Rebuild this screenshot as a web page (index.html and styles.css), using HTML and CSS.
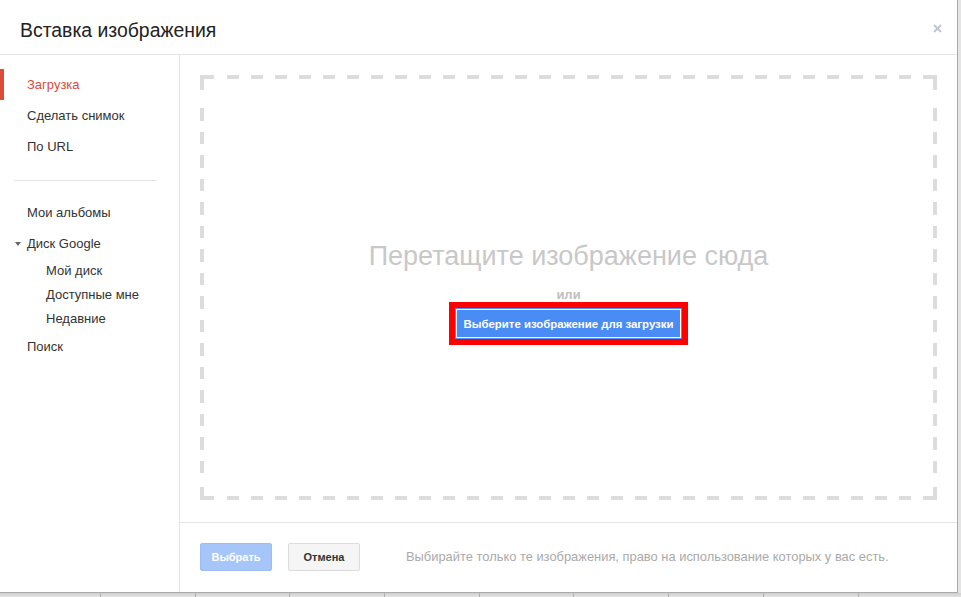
FILE: index.html
```html
<!DOCTYPE html>
<html lang="ru">
<head>
  <meta charset="UTF-8">
  <title>Вставка изображения</title>
  <link rel="stylesheet" href="styles.css">
</head>
<body>
  <div class="dialog">
    <header class="dlg-head">
      <h1 class="dlg-title">Вставка изображения</h1>
      <button class="dlg-close" title="Закрыть">
        <svg width="9" height="9" viewBox="0 0 9 9"><path d="M1 1L8 8M8 1L1 8" stroke="#bfc5d6" stroke-width="2"/></svg>
      </button>
    </header>

    <div class="dlg-body">
      <!-- left nav -->
      <nav class="side">
        <ul class="side-list">
          <li class="side-item active">Загрузка</li>
          <li class="side-item">Сделать снимок</li>
          <li class="side-item">По URL</li>
        </ul>
        <div class="side-sep"></div>
        <ul class="side-list">
          <li class="side-item">Мои альбомы</li>
          <li class="side-item caret-item"><span class="caret"></span>Диск Google</li>
          <li class="side-sub">Мой диск</li>
          <li class="side-sub">Доступные мне</li>
          <li class="side-sub">Недавние</li>
          <li class="side-item">Поиск</li>
        </ul>
      </nav>

      <!-- upload pane -->
      <main class="pane">
        <div class="pane-drop">
          <div class="drop">
            <div class="drop-title">Перетащите изображение сюда</div>
            <div class="drop-or">или</div>
            <button class="btn-upload">Выберите изображение для загрузки</button>
          </div>
        </div>
        <footer class="pane-foot">
          <button class="btn btn-primary" disabled>Выбрать</button>
          <button class="btn btn-plain">Отмена</button>
          <span class="foot-note">Выбирайте только те изображения, право на использование которых у вас есть.</span>
        </footer>
      </main>
    </div>
  </div>

  <div class="strip">
    <span class="strip-cell first"></span>
    <span class="strip-cell"></span>
    <span class="strip-cell"></span>
    <span class="strip-cell"></span>
    <span class="strip-cell"></span>
    <span class="strip-cell"></span>
    <span class="strip-cell"></span>
    <span class="strip-cell"></span>
    <span class="strip-cell"></span>
    <span class="strip-cell"></span>
  </div>
</body>
</html>
```

FILE: styles.css
```css
*{ box-sizing:border-box; }
body{
  margin:0;
  width:961px;
  height:597px;
  overflow:hidden;
  background:#e4e4e4;
  font-family:"Liberation Sans", Arial, sans-serif;
  font-size:13px;
  color:#333;
}
ul{ list-style:none; margin:0; padding:0; }
button{ font-family:inherit; }

.dialog{
  width:958px;
  height:593px;
  background:#fff;
  border-right:1px solid #a9a9a9;
  border-bottom:1px solid #a9a9a9;
  display:flex;
  flex-direction:column;
}

/* header */
.dlg-head{
  height:55px;
  flex:none;
  border-bottom:1px solid #e5e5e5;
  display:flex;
  align-items:center;
  justify-content:space-between;
  padding:0 15px 0 20px;
}
.dlg-title{
  margin:0;
  font-size:19.4px;
  font-weight:normal;
  color:#222;
  line-height:24px;
  padding-top:5px;
}
.dlg-close{
  border:0;
  background:none;
  padding:0;
  width:9px;
  height:9px;
  display:flex;
  cursor:pointer;
  margin-top:2px;
}

.dlg-body{ flex:1; display:flex; min-height:0; }

/* sidebar */
.side{
  width:180px;
  flex:none;
  border-right:1px solid #e5e5e5;
  padding-top:14px;
}
.side-item{
  line-height:31px;
  height:31px;
  padding-left:27px;
  color:#333;
  white-space:nowrap;
}
.side-item.active{
  color:#dd4b39;
  border-left:4px solid #dd4b39;
  padding-left:23px;
}
.caret-item{ padding-left:15px; display:flex; align-items:center; }
.caret{
  width:0; height:0;
  border-top:4px solid #666;
  border-left:3px solid transparent;
  border-right:3px solid transparent;
  margin-right:6px;
}
.side-sub{
  line-height:24px;
  padding-left:46px;
  color:#333;
}
.side-sep{
  border-top:1px solid #e5e5e5;
  margin:18px 22px 16px 14px;
}

/* pane */
.pane{ flex:1; display:flex; flex-direction:column; min-width:0; }
.pane-drop{ flex:1; padding:20px 20px 22px; }
.drop{
  height:100%;
  display:flex;
  flex-direction:column;
  align-items:center;
  justify-content:center;
  padding-top:4px;
  /* dashed frame: corner arms + dash runs */
  background:
    linear-gradient(#dcdcdc,#dcdcdc) 0 0 / 14px 4px no-repeat,
    linear-gradient(#dcdcdc,#dcdcdc) 0 0 / 4px 15px no-repeat,
    linear-gradient(#dcdcdc,#dcdcdc) 100% 0 / 14px 4px no-repeat,
    linear-gradient(#dcdcdc,#dcdcdc) 100% 0 / 4px 15px no-repeat,
    linear-gradient(#dcdcdc,#dcdcdc) 0 100% / 14px 4px no-repeat,
    linear-gradient(#dcdcdc,#dcdcdc) 0 100% / 4px 13px no-repeat,
    linear-gradient(#dcdcdc,#dcdcdc) 100% 100% / 14px 4px no-repeat,
    linear-gradient(#dcdcdc,#dcdcdc) 100% 100% / 4px 13px no-repeat,
    repeating-linear-gradient(to right, #dcdcdc 0 12px, transparent 12px 24px) 27px 0 / calc(100% - 41px) 4px no-repeat,
    repeating-linear-gradient(to right, #dcdcdc 0 12px, transparent 12px 24px) 27px 100% / calc(100% - 41px) 4px no-repeat,
    repeating-linear-gradient(#dcdcdc 0 12.5px, transparent 12.5px 23.5px) 0 33px / 4px calc(100% - 58px) no-repeat,
    repeating-linear-gradient(#dcdcdc 0 12.5px, transparent 12.5px 23.5px) 100% 33px / 4px calc(100% - 58px) no-repeat;
}
.drop-title{
  font-size:27px;
  line-height:32px;
  color:#c8c8c8;
}
.drop-or{
  margin-top:15px;
  font-size:13px;
  font-weight:bold;
  line-height:15px;
  color:#c0c0c0;
}
.btn-upload{
  margin-top:6px;
  height:31px;
  padding:0 8px;
  border:1px solid #4d90fe;
  box-shadow:inset 0 0 0 1px #fff;
  background:#4a8cf6;
  color:#fff;
  font-size:11.4px;
  font-weight:bold;
  outline:6px solid #f00;
  cursor:pointer;
}

/* footer */
.pane-foot{
  height:70px;
  flex:none;
  border-top:1px solid #e5e5e5;
  display:flex;
  align-items:center;
  padding:0 20px 2px;
}
.btn{
  width:72px;
  height:28px;
  border-radius:2px;
  font-size:11px;
  font-weight:bold;
  padding:0;
}
.btn-primary{
  background:#a6c6fa;
  border:1px solid #9dbdf3;
  color:#fff;
}
.btn-plain{
  margin-left:16px;
  background:#f5f5f5;
  border:1px solid #dcdcdc;
  color:#333;
}
.foot-note{
  margin-left:46px;
  color:#aaa;
  white-space:nowrap;
  font-size:12.9px;
}

/* window behind */
.strip{
  height:4px;
  display:flex;
  background:linear-gradient(#cfcfcf, #e2e2e2);
}
.strip-cell{
  width:94.7px;
  flex:none;
  border-left:1px solid #b0b0b0;
}
.strip-cell.first{ width:100px; border-left:0; }
```
